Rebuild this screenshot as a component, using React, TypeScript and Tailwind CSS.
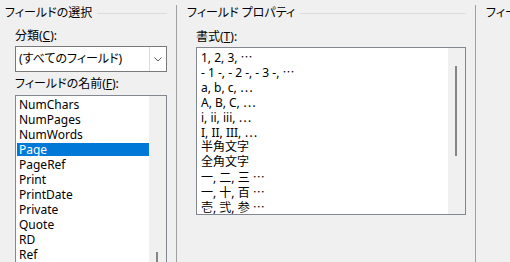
import React from "react";

const fieldNames = [
  "NumChars",
  "NumPages",
  "NumWords",
  "Page",
  "PageRef",
  "Print",
  "PrintDate",
  "Private",
  "Quote",
  "RD",
  "Ref",
];

const formats = [
  "1, 2, 3, …",
  "- 1 -, - 2 -, - 3 -, …",
  "a, b, c, …",
  "A, B, C, …",
  "i, ii, iii, …",
  "I, II, III, …",
  "半角文字",
  "全角文字",
  "一, 二, 三 …",
  "一, 十, 百 …",
  "壱, 弐, 参 …",
];

const GroupTitle: React.FC<{ label: string }> = ({ label }) => (
  <div className="flex items-center h-4 leading-4 whitespace-nowrap">
    <span>{label}</span>
    <div className="flex-1 h-px bg-[#dcdcdc] ml-[5px]" />
  </div>
);

// the ellipsis is drawn with the Japanese font, as in the dialog
const FormatText: React.FC<{ text: string }> = ({ text }) => {
  if (!text.endsWith("…")) return <>{text}</>;
  return (
    <>
      {text.slice(0, -1)}
      <span className="font-['Noto_Sans_CJK_JP',sans-serif]">…</span>
    </>
  );
};

const App: React.FC = () => {
  return (
    <div className="w-[510px] h-[262px] overflow-hidden bg-[#f0f0f0] flex text-[12px] text-black font-['Noto_Sans','Noto_Sans_CJK_JP',sans-serif] [font-feature-settings:'palt']">
      {/* フィールドの選択 */}
      <div className="w-[176px] shrink-0 pl-[5px] pr-[9px] pt-[5px] flex flex-col">
        <GroupTitle label="フィールドの選択" />
        <div className="pl-[10px]">
          <div className="mt-[7px] h-4 leading-4">
            分類(<span className="underline">C</span>):
          </div>
          <div className="mt-[2px] h-[26px] border border-[#7a7a7a] bg-white flex">
            <div className="flex-1 pl-[3px] leading-[24px] whitespace-nowrap">(すべてのフィールド)</div>
            <div className="w-[17px] border-l border-[#dcdcdc] flex items-center justify-center">
              <svg width="8" height="5" viewBox="0 0 8 5">
                <path d="M0.5 0.5 L4 4 L7.5 0.5" fill="none" stroke="#606060" strokeWidth="1" />
              </svg>
            </div>
          </div>
          <div className="mt-[4px] h-4 leading-4">
            フィールドの名前(<span className="underline">F</span>):
          </div>
          <div className="mt-[3px] h-[170px] border border-[#828790] bg-white flex">
            <div className="flex-1 pt-px pl-px">
              {fieldNames.map((name) => (
                <div
                  key={name}
                  className={
                    name === "Page"
                      ? "h-[15px] leading-[15px] pl-[2px] bg-[#0078d7] text-white shadow-[inset_0_1px_0_#ffffff,inset_0_-1px_0_#ffffff]"
                      : "h-[15px] leading-[15px] pl-[2px]"
                  }
                >
                  {name}
                </div>
              ))}
            </div>
            <div className="w-[17px] bg-[#f0f0f0] pt-[156px]">
              <div className="ml-[7px] w-[2px] h-[14px] bg-[#858585]" />
            </div>
          </div>
        </div>
      </div>

      <div className="w-px mt-[5px] bg-[#a0a0a0] shrink-0" />

      {/* フィールド プロパティ */}
      <div className="w-[298px] shrink-0 pl-[10px] pr-[9px] pt-[5px] flex flex-col">
        <GroupTitle label="フィールド プロパティ" />
        <div className="pl-[9px]">
          <div className="mt-[8px] h-4 leading-4">
            書式(<span className="underline">T</span>):
          </div>
          <div className="mt-[2px] h-[168px] border border-[#828790] bg-white flex">
            <div className="flex-1 pt-px pl-[4px]">
              {formats.map((f) => (
                <div key={f} className="h-[15px] leading-[15px] whitespace-nowrap">
                  <FormatText text={f} />
                </div>
              ))}
            </div>
            <div className="w-[17px] bg-[#f0f0f0] pt-[18px]">
              <div className="ml-[7px] w-[2px] h-[90px] bg-[#858585]" />
            </div>
          </div>
        </div>
      </div>

      <div className="w-px mt-[5px] bg-[#a0a0a0] shrink-0" />

      {/* フィールド オプション */}
      <div className="flex-1 min-w-0 pl-[10px] pt-[5px] overflow-hidden">
        <div className="h-4 leading-4 whitespace-nowrap">フィールド オプション</div>
      </div>
    </div>
  );
};

export default App;
